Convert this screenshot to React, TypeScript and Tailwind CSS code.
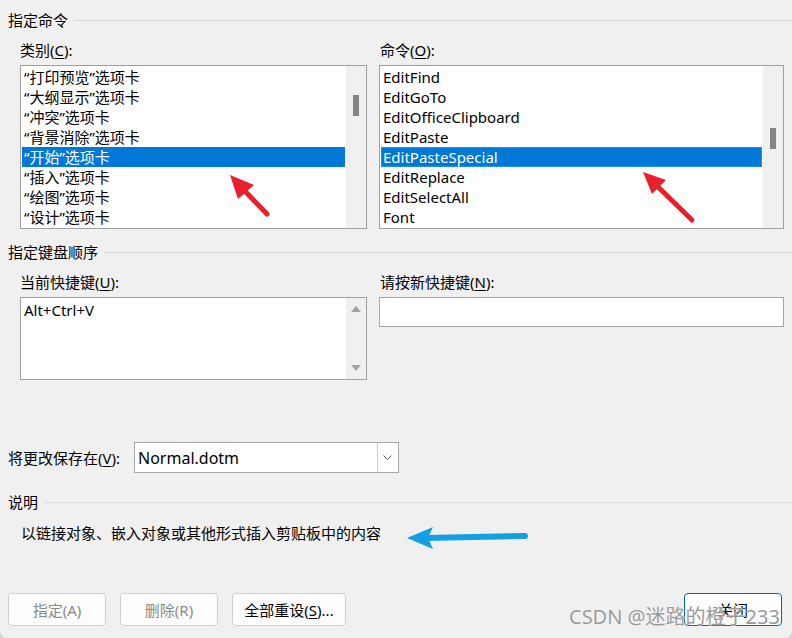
import clsx from 'clsx'

const categories = [
  '“打印预览”选项卡',
  '“大纲显示”选项卡',
  '“冲突”选项卡',
  '“背景消除”选项卡',
  '“开始”选项卡',
  '“插入”选项卡',
  '“绘图”选项卡',
  '“设计”选项卡',
]

const commands = [
  'EditFind',
  'EditGoTo',
  'EditOfficeClipboard',
  'EditPaste',
  'EditPasteSpecial',
  'EditReplace',
  'EditSelectAll',
  'Font',
]

function SectionHeader({ title }: { title: string }) {
  return (
    <div className="flex h-[20px] items-center pl-[8px]">
      <span className="whitespace-nowrap">{title}</span>
      <div className="ml-[6px] h-px flex-1 bg-[#dadada]" />
    </div>
  )
}

function Label({ text, hotkey }: { text: string; hotkey: string }) {
  return (
    <div className="h-[20px] whitespace-nowrap">
      {text}(<u className="underline-offset-2">{hotkey}</u>):
    </div>
  )
}

interface ListBoxProps {
  items: string[]
  selected: string
  thumbClass: string
  focused?: boolean
}

function ListBox({ items, selected, thumbClass, focused }: ListBoxProps) {
  return (
    <div className="mt-[5px] flex h-[164px] border border-[#a0a0a0] bg-white">
      <div className="flex-1 overflow-hidden px-px pt-px">
        {items.map((item) => (
          <div
            key={item}
            className={clsx(
              'h-[20px] whitespace-nowrap pl-[2px]',
              item === selected && 'bg-[#0078d7] text-white',
              item === selected &&
                focused &&
                'outline-1 -outline-offset-1 outline-dotted outline-[#c8873a]'
            )}
          >
            {item}
          </div>
        ))}
      </div>
      <div className="w-[20px] bg-[#f0f0f0]">
        <div className={clsx('ml-[7px] h-[21px] w-[6px] bg-[#858585]', thumbClass)} />
      </div>
    </div>
  )
}

function DialogButton({
  children,
  disabled,
  primary,
  className,
}: {
  children: React.ReactNode
  disabled?: boolean
  primary?: boolean
  className?: string
}) {
  return (
    <button
      type="button"
      className={clsx(
        'flex h-[33px] items-center justify-center rounded-[4px] border bg-[#fdfdfd]',
        primary ? 'border-[#0067c0]' : 'border-[#d0d0d0]',
        disabled ? 'text-[#8a8a8a]' : 'text-black',
        className
      )}
    >
      {children}
    </button>
  )
}

export default function App() {
  return (
    <div className="h-[638px] w-[792px] bg-[#d8d8d8]">
      <div className="relative flex h-[638px] flex-col overflow-hidden rounded-b-[8px] bg-[#f0f0f0] pt-[10px] font-['Noto_Sans','Noto_Sans_CJK_SC',sans-serif] text-[15px] leading-[20px] text-black">
        <SectionHeader title="指定命令" />

        <div className="mt-[10px] flex gap-[12px] pl-[20px] pr-[8px]">
          <div className="w-[347px]">
            <Label text="类别" hotkey="C" />
            <ListBox items={categories} selected="“开始”选项卡" thumbClass="mt-[29px]" />
          </div>
          <div className="w-[405px]">
            <div className="pl-px">
              <Label text="命令" hotkey="O" />
            </div>
            <ListBox
              items={commands}
              selected="EditPasteSpecial"
              thumbClass="mt-[62px]"
              focused
            />
          </div>
        </div>

        <div className="mt-[13px]">
          <SectionHeader title="指定键盘顺序" />
        </div>

        <div className="mt-[10px] flex gap-[12px] pl-[20px] pr-[8px]">
          <div className="w-[347px]">
            <Label text="当前快捷键" hotkey="U" />
            <div className="mt-[5px] flex h-[83px] border border-[#a0a0a0] bg-white">
              <div className="flex-1 pl-[3px] pt-[2px]">Alt+Ctrl+V</div>
              <div className="flex w-[20px] flex-col items-center justify-between bg-[#f0f0f0] pb-[8px] pt-[8px]">
                <svg width="10" height="6" viewBox="0 0 10 6">
                  <path d="M0 6 L5 0 L10 6 Z" fill="#a3a3a3" />
                </svg>
                <svg width="10" height="6" viewBox="0 0 10 6">
                  <path d="M0 0 L10 0 L5 6 Z" fill="#a3a3a3" />
                </svg>
              </div>
            </div>
          </div>
          <div className="w-[405px]">
            <div className="pl-px">
              <Label text="请按新快捷键" hotkey="N" />
            </div>
            <div className="mt-[5px] h-[30px] border border-[#a8a8a8] bg-white" />
          </div>
        </div>

        <div className="mt-[62px] flex items-center pl-[8px]">
          <div className="w-[126px] whitespace-nowrap">
            将更改保存在(<u className="underline-offset-2">V</u>):
          </div>
          <div className="flex h-[31px] w-[265px] items-center border border-[#a8a8a8] bg-white">
            <span className="flex-1 pl-[3px] text-[16px]">Normal.dotm</span>
            <div className="mr-px flex h-[29px] w-[20px] items-center justify-center border-l border-[#d0d0d0]">
              <svg width="9" height="5" viewBox="0 0 9 5">
                <path d="M0.5 0.5 L4.5 4.5 L8.5 0.5" fill="none" stroke="#5a5a5a" strokeWidth="1" />
              </svg>
            </div>
          </div>
        </div>

        <div className="mt-[19px]">
          <SectionHeader title="说明" />
        </div>

        <div className="mt-[11px] pl-[21px]">以链接对象、嵌入对象或其他形式插入剪贴板中的内容</div>

        <div className="mt-[50px] flex pl-[8px] pr-[10px]">
          <DialogButton disabled className="w-[98px]">
            指定(A)
          </DialogButton>
          <DialogButton disabled className="ml-[14px] w-[98px]">
            删除(R)
          </DialogButton>
          <DialogButton className="ml-[14px] w-[114px]">
            <span>
              全部重设(<u className="underline-offset-2">S</u>)...
            </span>
          </DialogButton>
          <DialogButton primary className="ml-auto w-[98px]">
            关闭
          </DialogButton>
        </div>

        {/* annotation arrows drawn over the dialog */}
        <svg
          className="pointer-events-none absolute left-0 top-0"
          width="792"
          height="638"
          viewBox="0 0 792 638"
        >
          <line x1="267" y1="214" x2="240" y2="186" stroke="#e8202a" strokeWidth="5" strokeLinecap="round" />
          <polygon points="230,175 254,185 238,199" fill="#e8202a" />
          <line x1="692" y1="220" x2="653" y2="182" stroke="#e8202a" strokeWidth="5" strokeLinecap="round" />
          <polygon points="643,172 666,180 652,194" fill="#e8202a" />
          <line x1="525" y1="536" x2="425" y2="538" stroke="#12a0e3" strokeWidth="6" strokeLinecap="round" />
          <polygon points="407,538 433,527 428,538 433,549" fill="#12a0e3" />
        </svg>

        <div className="absolute left-[569px] top-[604px] whitespace-nowrap text-[20px] leading-[26px] text-[#9a9a9a] [text-shadow:0_0_1px_#ffffff,0_0_1px_#ffffff]">
          CSDN @迷路的橙子233
        </div>
      </div>
    </div>
  )
}
